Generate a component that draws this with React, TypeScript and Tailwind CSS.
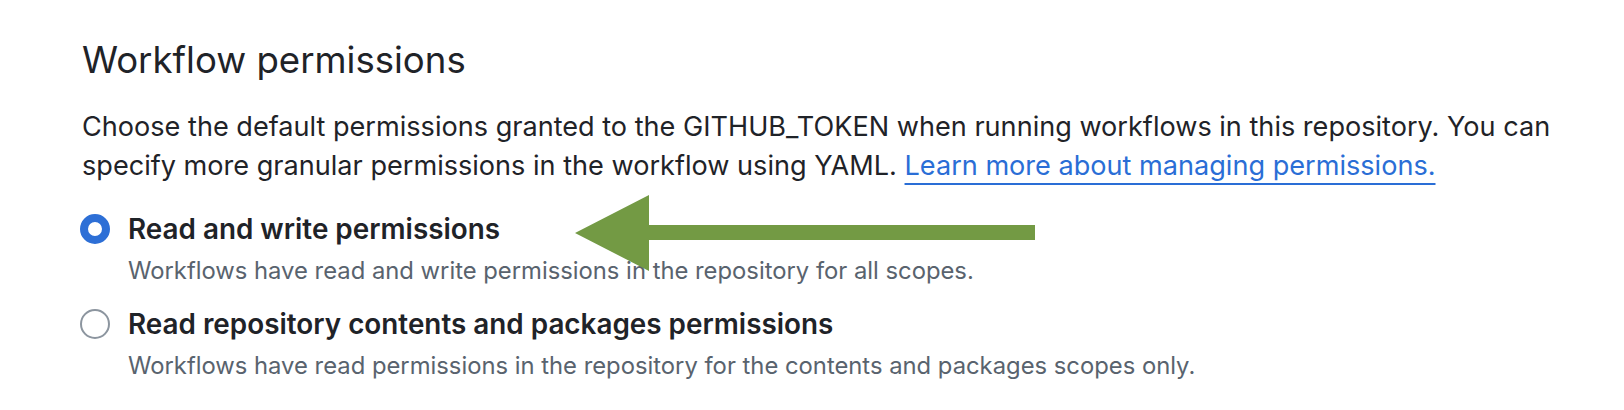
import React from "react";

function Radio({ checked }: { checked: boolean }) {
  return checked ? (
    <div className="w-[30px] h-[30px] rounded-full border-[8px] border-[#2d6fd6] bg-white shrink-0" />
  ) : (
    <div className="w-[30px] h-[30px] rounded-full border-2 border-[#8c959f] bg-white shrink-0" />
  );
}

function Option({ checked, title, desc }: { checked: boolean; title: string; desc: string }) {
  return (
    <div className="flex flex-col">
      <div className="flex items-center gap-[18px] h-[40px]">
        <Radio checked={checked} />
        <span className="text-[27.85px] leading-[40px] font-semibold text-[#1f2328]">{title}</span>
      </div>
      <div className="pl-[48px] text-[23.8px] leading-[44px] text-[#59636e]">{desc}</div>
    </div>
  );
}

export default function App() {
  return (
    <div
      className="relative w-[1624px] h-[410px] bg-white overflow-hidden"
      style={{ fontFamily: "Inter, 'Noto Sans', sans-serif" }}
    >
      <div className="pl-[80px] pt-[35px]">
        <h2 className="pl-[2px] text-[36.6px] leading-[50px] font-normal text-[#1f2328]">Workflow permissions</h2>
        <p className="mt-[22px] pl-[2px] text-[27.1px] leading-[39px] text-[#1f2328]">
          Choose the default permissions granted to the GITHUB_TOKEN when running workflows in this repository. You can
          <br />
          specify more granular permissions in the workflow using YAML.{" "}
          <a className="text-[#2a6ed6] underline decoration-2 underline-offset-[8px]" href="#">
            Learn more about managing permissions.
          </a>
        </p>
        <div className="mt-[24px] flex flex-col gap-[11px]">
          <Option
            checked
            title="Read and write permissions"
            desc="Workflows have read and write permissions in the repository for all scopes."
          />
          <Option
            checked={false}
            title="Read repository contents and packages permissions"
            desc="Workflows have read permissions in the repository for the contents and packages scopes only."
          />
        </div>
      </div>
      <svg className="absolute left-0 top-0" width="1624" height="410" viewBox="0 0 1624 410">
        <polygon points="575,233 649,195 649,225 1035,225 1035,240 649,240 649,271" fill="#739a44" />
      </svg>
    </div>
  );
}
